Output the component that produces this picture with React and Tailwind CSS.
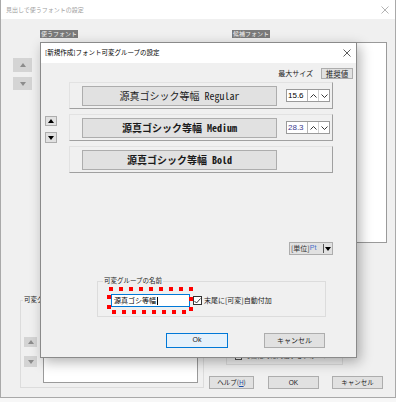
import React from "react";

const jp = "font-['Noto_Sans_CJK_JP','Noto_Sans',sans-serif]";
const monoJp = "font-['Noto_Sans_Mono_CJK_JP','Noto_Sans_CJK_JP',monospace]";

function Tri({ dir = "up", color = "#000" }) {
  return (
    <svg width="6" height="4" viewBox="0 0 6 4">
      <polygon points={dir === "up" ? "0,4 6,4 3,0" : "0,0 6,0 3,4"} fill={color} />
    </svg>
  );
}

function Chevron({ dir }) {
  return (
    <svg width="7" height="4" viewBox="0 0 7 4">
      <polyline
        points={dir === "up" ? "0.5,3.5 3.5,0.5 6.5,3.5" : "0.5,0.5 3.5,3.5 6.5,0.5"}
        fill="none"
        stroke="#222"
        strokeWidth="0.9"
      />
    </svg>
  );
}

function CloseX({ color, size = 8 }) {
  return (
    <svg width={size} height={size} viewBox="0 0 8 8">
      <path d="M0.5 0.5 L7.5 7.5 M7.5 0.5 L0.5 7.5" stroke={color} strokeWidth="0.8" />
    </svg>
  );
}

const Spinner = ({ value, color }) => (
  <div className="ml-[9px] h-[13px] flex border border-[#9a9a9a] bg-white">
    <div
      className={`w-[21px] flex items-center pl-[1px] text-[8px] leading-none font-['Liberation_Sans',sans-serif] border-r border-[#b5b5b5] ${color}`}
    >
      {value}
    </div>
    <div className="w-[11px] flex items-center justify-center border-r border-[#d0d0d0]">
      <Chevron dir="up" />
    </div>
    <div className="w-[10px] flex items-center justify-center">
      <Chevron dir="down" />
    </div>
  </div>
);

const FontRow = ({ label, weight, size, sizeColor }) => (
  <div className="h-[27px] flex items-center pl-[12px] border border-t-[#e2e2e2] border-l-[#e2e2e2] border-b-[#a0a0a0] border-r-[#a0a0a0]">
    <div
      className={`w-[195px] h-[20px] flex items-center justify-center bg-[#e1e1e1] border border-[#adadad] text-[10px] leading-none text-[#1a1a1a] ${monoJp} ${weight}`}
    >
      {label}
    </div>
    {size && <Spinner value={size} color={sizeColor} />}
  </div>
);

const SmallBtn = ({ dir, h, disabled }) => (
  <div
    className={`${h} flex items-center justify-center ${
      disabled ? "bg-[#d4d4d4]" : "bg-[#e1e1e1] border border-[#adadad]"
    }`}
  >
    <Tri dir={dir} color={disabled ? "#8c8c8c" : "#000"} />
  </div>
);

export default function App() {
  return (
    <div className={`relative w-[396px] h-[402px] overflow-hidden bg-[#f7f7f7] ${jp}`}>
      {/* background window */}
      <div className="h-[398px] flex flex-col bg-[#f0f0f0] border-l border-r border-b border-[#a9a9a9]">
        <div className="h-[19px] shrink-0 bg-white flex items-center justify-between pl-[5px] pr-[6px]">
          <span className="text-[6px] text-[#a0a0a0]">見出しで使うフォントの設定</span>
          <CloseX color="#a0a0a0" />
        </div>

        <div className="flex pt-[11px] pl-[12px]">
          <div className="w-[19px] mt-[28px] flex flex-col gap-[5px]">
            <SmallBtn dir="up" h="h-[14px]" disabled />
            <SmallBtn dir="down" h="h-[13px]" disabled />
          </div>
          <div className="ml-[8px] w-[154px] flex flex-col">
            <span className="self-start h-[8px] px-[1px] text-[6px] leading-[8px] bg-[#7a7a7a] text-[#f2f2f2]">使うフォント</span>
            <div className="mt-[4px] h-[201px] border border-[#9a9a9a] bg-white" />
          </div>
          <div className="ml-[38px] w-[155px] flex flex-col">
            <span className="self-start h-[8px] px-[1px] text-[6px] leading-[8px] bg-[#7a7a7a] text-[#f2f2f2]">候補フォント</span>
            <div className="mt-[4px] h-[201px] border border-[#9a9a9a] bg-white" />
          </div>
        </div>

        <div className="flex mt-[57px] ml-[19px]">
          <div className="relative w-[184px] h-[88px] border border-[#dcdcdc]">
            <span className="absolute left-[2px] top-[-6px] px-[1px] bg-[#f0f0f0] text-[6.5px] text-[#222]">可変グループ</span>
            <div className="flex items-start pl-[3px]">
              <div className="w-[13px] mt-[36px] flex flex-col gap-[9px]">
                <SmallBtn dir="up" h="h-[10px]" disabled />
                <SmallBtn dir="down" h="h-[11px]" disabled />
              </div>
              <div className="ml-[6px] mt-[9px] w-[155px] h-[73px] border border-[#9a9a9a] bg-white" />
            </div>
          </div>
          <div className="ml-[5px] flex flex-col">
            <div className="ml-[17px] w-[117px] h-[65px] border border-[#dcdcdc] flex flex-col justify-end pb-[3px] pl-[8px]">
              <div className="flex items-center">
                <div className="w-[7px] h-[7px] border border-[#555] bg-white" />
                <span className="ml-[2px] text-[6.5px] text-[#444]">可変化時に同梱するフォント</span>
              </div>
            </div>
            <div className="mt-[11px] flex text-[6.5px] text-[#222]">
              <div className="w-[45px] h-[13px] flex items-center justify-center bg-[#e1e1e1] border border-[#adadad]">
                ヘルプ(<span className="underline text-[#1d4fa8]">H</span>)
              </div>
              <div className="ml-[14px] w-[51px] h-[13px] flex items-center justify-center bg-[#e1e1e1] border border-[#adadad] font-['Liberation_Sans',sans-serif]">
                OK
              </div>
              <div className="ml-[13px] w-[51px] h-[13px] flex items-center justify-center bg-[#e1e1e1] border border-[#adadad]">
                キャンセル
              </div>
            </div>
          </div>
        </div>
      </div>

      {/* foreground dialog */}
      <div className="absolute left-[40px] top-[42px] w-[317px] h-[316px] flex flex-col bg-[#f0f0f0] border border-[#8a8a8a] shadow-[3px_4px_12px_rgba(0,0,0,0.3)]">
        <div className="h-[20px] shrink-0 bg-white flex items-center justify-between pl-[4px] pr-[5px]">
          <span className="text-[6.5px] text-black">[新規作成]フォント可変グループの設定</span>
          <CloseX color="#333" />
        </div>

        <div className="flex flex-col">
          <div className="pt-[5px] pr-[3px] flex justify-end items-center">
            <span className="mr-[8px] text-[7px] text-[#222]">最大サイズ</span>
            <div className="w-[32px] h-[11px] flex items-center justify-center bg-[#e1e1e1] border border-[#adadad] text-[7.5px] text-[#222]">
              推奨値
            </div>
          </div>

          <div className="flex mt-[3px]">
            <div className="ml-[4px] mt-[34px] w-[12px] flex flex-col gap-[6px]">
              <SmallBtn dir="up" h="h-[10px]" />
              <SmallBtn dir="down" h="h-[11px]" />
            </div>
            <div className="ml-[12px] w-[264px] flex flex-col">
              <div className="flex flex-col gap-[5px]">
                <FontRow label="源真ゴシック等幅 Regular" weight="font-normal" size="15.6" sizeColor="text-black" />
                <FontRow label="源真ゴシック等幅 Medium" weight="font-semibold" size="28.3" sizeColor="text-[#3b3b8f]" />
                <FontRow label="源真ゴシック等幅 Bold" weight="font-bold" />
              </div>
              <div className="self-end mt-[69px] w-[44px] h-[13px] flex items-center bg-[#e1e1e1] border border-[#adadad] text-[7px]">
                <span className="pl-[1px] text-[#333]">[単位]</span>
                <span className="text-[#4a6fc9] font-['Liberation_Sans',sans-serif]">Pt</span>
                <span className="flex-1" />
                <span className="w-px h-[9px] bg-[#555]" />
                <span className="mx-[1px] flex items-center">
                  <Tri dir="down" />
                </span>
              </div>
            </div>
          </div>

          <div className="relative mt-[26px] ml-[56px] w-[229px] h-[36px] border border-[#dcdcdc]">
            <span className="absolute left-[5px] top-[-6px] px-[1px] bg-[#f0f0f0] text-[6.5px] text-[#222]">可変グループの名前</span>
            <div className="flex items-center pl-[13px] pt-[12px]">
              <div className="w-[79px] h-[13px] flex items-center pl-[2px] border border-[#0078d7] bg-white text-[7px] text-black">
                源真ゴシ等幅
                <span className="ml-[1px] w-px h-[8px] bg-black" />
              </div>
              <div className="ml-[3px] w-[9px] h-[9px] flex items-center justify-center border border-[#333] bg-white">
                <svg width="7" height="6" viewBox="0 0 7 6">
                  <polyline points="0.5,3 2.5,5 6.5,0.5" fill="none" stroke="#222" strokeWidth="0.9" />
                </svg>
              </div>
              <span className="ml-[2px] text-[7px] text-[#222]">末尾に[可変]自動付加</span>
            </div>
            <svg className="absolute left-[9px] top-[5px]" width="86" height="27" viewBox="0 0 86 27" shapeRendering="crispEdges">
              <rect x="2" y="2" width="82" height="23" fill="none" stroke="#ff0000" strokeWidth="4" strokeDasharray="4 6" />
            </svg>
          </div>

          <div className="mt-[16px] flex text-[7px] text-[#222]">
            <div className="ml-[125px] w-[62px] h-[15px] flex items-center justify-center bg-[#e5f1fb] border border-[#0078d7] font-['Liberation_Sans',sans-serif]">
              Ok
            </div>
            <div className="ml-[36px] w-[61px] h-[15px] flex items-center justify-center bg-[#e1e1e1] border border-[#adadad]">
              キャンセル
            </div>
          </div>
        </div>
      </div>
    </div>
  );
}
